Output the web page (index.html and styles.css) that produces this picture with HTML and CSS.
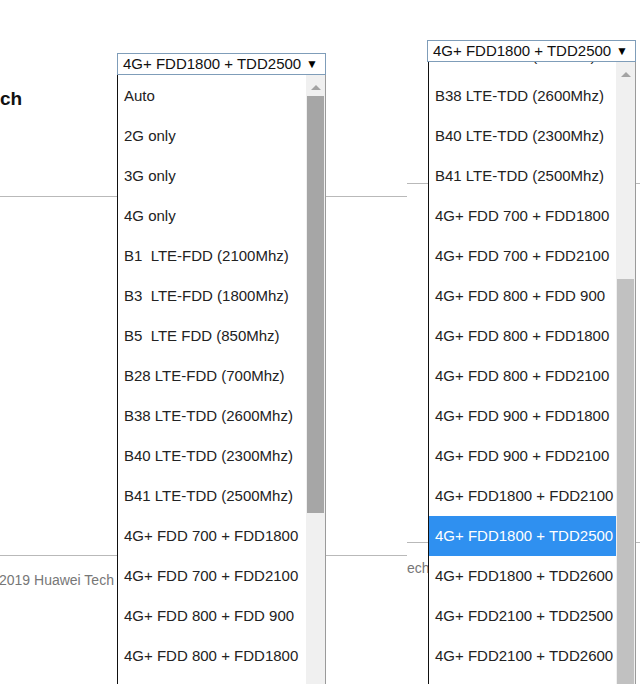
FILE: index.html
```html
<!DOCTYPE html>
<html lang="en">
<head>
  <meta charset="UTF-8">
  <title>Network mode</title>
  <link rel="stylesheet" href="styles.css">
</head>
<body>
  <div class="shots">
    <!-- first capture: list scrolled to top -->
    <div class="shot shot-left">
      <h2 class="title">ch</h2>
      <div class="rule rule-top"></div>
      <div class="rule rule-foot"></div>
      <div class="copy">2019 Huawei Tech</div>

      <div class="dropdown dd-left">
        <div class="select">4G+ FDD1800 + TDD2500<span class="caret">&#9660;</span></div>
        <div class="list">
          <div class="options">
            <div class="opt">Auto</div>
            <div class="opt">2G only</div>
            <div class="opt">3G only</div>
            <div class="opt">4G only</div>
            <div class="opt">B1  LTE-FDD (2100Mhz)</div>
            <div class="opt">B3  LTE-FDD (1800Mhz)</div>
            <div class="opt">B5  LTE FDD (850Mhz)</div>
            <div class="opt">B28 LTE-FDD (700Mhz)</div>
            <div class="opt">B38 LTE-TDD (2600Mhz)</div>
            <div class="opt">B40 LTE-TDD (2300Mhz)</div>
            <div class="opt">B41 LTE-TDD (2500Mhz)</div>
            <div class="opt">4G+ FDD 700 + FDD1800</div>
            <div class="opt">4G+ FDD 700 + FDD2100</div>
            <div class="opt">4G+ FDD 800 + FDD 900</div>
            <div class="opt">4G+ FDD 800 + FDD1800</div>
          </div>
          <div class="scrollbar">
            <span class="up"></span>
            <div class="thumb"></div>
          </div>
        </div>
      </div>
    </div>

    <!-- second capture: list scrolled to the selected item -->
    <div class="shot shot-right">
      <div class="rule rule-top"></div>
      <div class="rule rule-foot"></div>
      <div class="copy">ech</div>

      <div class="dropdown dd-right">
        <div class="select">4G+ FDD1800 + TDD2500<span class="caret">&#9660;</span></div>
        <div class="list">
          <div class="options">
            <div class="opt">B28 LTE-FDD (700Mhz)</div>
            <div class="opt">B38 LTE-TDD (2600Mhz)</div>
            <div class="opt">B40 LTE-TDD (2300Mhz)</div>
            <div class="opt">B41 LTE-TDD (2500Mhz)</div>
            <div class="opt">4G+ FDD 700 + FDD1800</div>
            <div class="opt">4G+ FDD 700 + FDD2100</div>
            <div class="opt">4G+ FDD 800 + FDD 900</div>
            <div class="opt">4G+ FDD 800 + FDD1800</div>
            <div class="opt">4G+ FDD 800 + FDD2100</div>
            <div class="opt">4G+ FDD 900 + FDD1800</div>
            <div class="opt">4G+ FDD 900 + FDD2100</div>
            <div class="opt">4G+ FDD1800 + FDD2100</div>
            <div class="opt selected">4G+ FDD1800 + TDD2500</div>
            <div class="opt">4G+ FDD1800 + TDD2600</div>
            <div class="opt">4G+ FDD2100 + TDD2500</div>
            <div class="opt">4G+ FDD2100 + TDD2600</div>
          </div>
          <div class="scrollbar">
            <span class="up"></span>
            <div class="thumb"></div>
          </div>
        </div>
      </div>
    </div>
  </div>
</body>
</html>
```

FILE: styles.css
```css
body {
  margin: 0;
  background: #fff;
  font-family: 'Liberation Sans', Arial, sans-serif;
  color: #222;
}
.shots {
  display: flex;
  width: 640px;
  height: 684px;
  overflow: hidden;
}
.shot {
  position: relative;
  height: 684px;
  overflow: hidden;
  flex: none;
}
.shot-left {
  width: 407px;
}
.shot-right {
  width: 233px;
}

/* page behind the popup */
.title {
  margin: 88px 0 0;
  font-size: 19px;
  line-height: 22px;
  font-weight: bold;
  color: #111;
}
.rule {
  height: 1px;
  background: #b9b9b9;
}
.shot-left .rule-top {
  margin-top: 86px;
}
.shot-left .rule-foot {
  margin-top: 358px;
}
.shot-right .rule-top {
  margin-top: 183px;
}
.shot-right .rule-foot {
  margin-top: 358px;
}
.copy {
  font-size: 14px;
  line-height: 16px;
  color: #777;
  white-space: nowrap;
}
.shot-left .copy {
  margin-top: 16px;
  margin-left: -1px;
}
.shot-right .copy {
  margin-top: 17px;
}

/* dropdown popup */
.dropdown {
  position: absolute;
  width: 209px;
}
.dd-left {
  left: 117px;
  top: 53px;
}
.dd-right {
  left: 20px;
  top: 40px;
}
.select {
  height: 20px;
  border: 1px solid #7f9db9;
  background: #fff;
  font-size: 15px;
  line-height: 20px;
  padding-left: 5px;
  color: #111;
  position: relative;
}
.caret {
  position: absolute;
  right: 7px;
  top: 0;
  font-size: 12px;
  color: #000;
}
.list {
  display: flex;
  height: 640px;
  border-left: 1px solid #111;
  border-right: 1px solid #9a9a9a;
  background: #fff;
}
.dd-right .list {
  margin-left: 1px;
  width: 206px;
}
.options {
  flex: 1;
  overflow: hidden;
  padding-top: 1px;
}
.dd-right .options {
  padding-top: 0;
}
/* list is scrolled: the first row shows only its bottom edge */
.dd-right .opt:first-child {
  margin-top: -26px;
}
.opt {
  height: 40px;
  line-height: 40px;
  font-size: 15px;
  padding-left: 6px;
  white-space: pre;
  color: #222;
}
.opt.selected {
  background: #2f90f0;
  color: #fff;
}
.scrollbar {
  width: 19px;
  flex: none;
  background: #f0f0f0;
  position: relative;
}
.up {
  position: absolute;
  left: 5px;
  top: 10px;
  width: 0;
  height: 0;
  border-left: 5px solid transparent;
  border-right: 5px solid transparent;
  border-bottom: 5px solid #a3a3a3;
}
.thumb {
  position: absolute;
  left: 1px;
  right: 1px;
}
.dd-left .thumb {
  top: 21px;
  height: 417px;
  background: #a6a6a6;
}
.dd-right .thumb {
  top: 217px;
  height: 440px;
  background: #c1c1c1;
}
```
